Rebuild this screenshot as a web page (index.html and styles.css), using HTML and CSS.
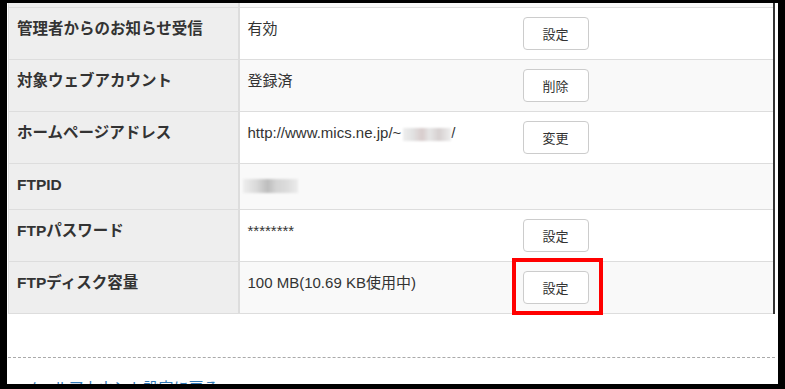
FILE: index.html
```html
<!DOCTYPE html>
<html lang="ja">
<head>
  <meta charset="UTF-8" />
  <meta name="viewport" content="width=device-width, initial-scale=1.0"/>
  <title>ウェブアカウント設定</title>
  <link rel="stylesheet" href="styles.css">
</head>
<body>

  <div class="page">
    <div class="panel">
      <table class="info-table">
        <colgroup>
          <col class="col-label">
          <col class="col-value">
          <col>
        </colgroup>
        <tr class="cut-row"><th></th><td></td><td></td></tr>
        <tr>
          <th>管理者からのお知らせ受信</th>
          <td>有効</td>
          <td class="action"><button class="btn" type="button">設定</button></td>
        </tr>
        <tr>
          <th>対象ウェブアカウント</th>
          <td>登録済</td>
          <td class="action"><button class="btn" type="button">削除</button></td>
        </tr>
        <tr>
          <th>ホームページアドレス</th>
          <td>http://www.mics.ne.jp/~<span class="masked masked-url"></span>/</td>
          <td class="action"><button class="btn" type="button">変更</button></td>
        </tr>
        <tr class="plain">
          <th>FTPID</th>
          <td><span class="masked masked-id"></span></td>
          <td></td>
        </tr>
        <tr>
          <th>FTPパスワード</th>
          <td>********</td>
          <td class="action"><button class="btn" type="button">設定</button></td>
        </tr>
        <tr>
          <th>FTPディスク容量</th>
          <td>100 MB(10.69 KB使用中)</td>
          <td class="action">
            <span class="highlight"><button class="btn" type="button">設定</button></span>
          </td>
        </tr>
      </table>
    </div>

    <hr class="divider">

    <a class="back-link" href="#">« メールアカウント設定に戻る</a>
  </div>

</body>
</html>
```

FILE: styles.css
```css
body {
  margin: 0;
  background: #000;
  color: #333;
  font-family: "Liberation Sans", "Noto Sans CJK JP", sans-serif;
  font-size: 15px;
  line-height: 20px;
}

.page {
  margin: 3px 0 0 7px;
  width: 770px;
  height: 381px;
  padding-left: 1px;
  background: #fff;
  overflow: hidden;
}

.panel {
  width: 765px;
  border-right: 2px solid #333;
}

.info-table {
  width: 100%;
  border-collapse: collapse;
  table-layout: fixed;
}

.col-label {
  width: 230px;
}

.col-value {
  width: 276px;
}

.info-table th,
.info-table td {
  padding: 11px 8px 7px;
  border-top: 1px solid #ddd;
  border-bottom: 1px solid #ddd;
  text-align: left;
  vertical-align: top;
  white-space: nowrap;
}

.info-table td.action {
  padding: 9px 8px;
}

.info-table th {
  background: #eee;
  border-left: 1px solid #ddd;
  border-right: 2px solid #ddd;
  font-size: 15.5px;
  font-weight: bold;
}

.info-table td {
  background: #fff;
}

.info-table tr:nth-child(odd) td {
  background: #f9f9f9;
}

.info-table .cut-row th,
.info-table .cut-row td {
  height: 4px;
  padding: 0;
  border-top: 0;
}

.info-table .plain th,
.info-table .plain td {
  padding-bottom: 14px;
}

.btn {
  display: block;
  width: 66px;
  height: 33px;
  padding: 0;
  background: #fff;
  border: 1px solid #ccc;
  border-radius: 4px;
  color: #333;
  font-family: "Noto Sans CJK JP", sans-serif;
  font-size: 13px;
}

.highlight {
  position: relative;
  display: block;
  width: 66px;
}

.highlight::after {
  content: "";
  position: absolute;
  left: -11px;
  right: -14px;
  top: -13px;
  bottom: -11px;
  border: 4px solid #f00;
}

.masked {
  display: inline-block;
  vertical-align: middle;
  filter: blur(1px);
}

.masked-url {
  width: 48px;
  height: 13px;
  margin-left: 2px;
  background: linear-gradient(90deg, #eee 0, #e2e2e2 20%, #d8cccc 40%, #e6e6e6 55%, #d6d0d0 75%, #eee 100%);
}

.masked-id {
  width: 55px;
  height: 14px;
  margin: 0 0 0 -5px;
  background: linear-gradient(90deg, #eee 0, #d9d9d9 25%, #bdbdbd 45%, #d4d4d4 60%, #dcdcdc 80%, #ececec 100%);
}

.divider {
  width: 767px;
  margin: 43px 0 0;
  border: 0;
  border-top: 1px dashed #aaa;
}

.back-link {
  display: inline-block;
  margin: 20px 0 0 3px;
  color: #337ab7;
  text-decoration: none;
}
```
